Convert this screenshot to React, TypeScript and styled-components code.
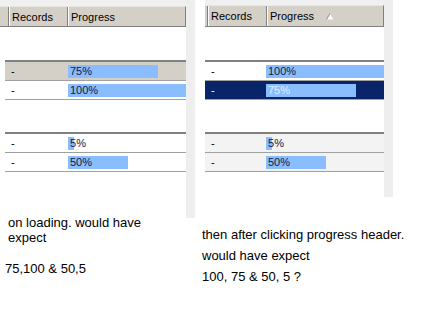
import * as React from "react";
import styled, { createGlobalStyle } from "styled-components";

const GlobalStyle = createGlobalStyle`
  html, body {
    margin: 0;
    padding: 0;
    background: #ffffff;
  }
`;

type Tone = "white" | "gray" | "light" | "selected";

interface RowData {
  pct: number;
  tone: Tone;
}

const leftGroups: RowData[][] = [
  [
    { pct: 75, tone: "gray" },
    { pct: 100, tone: "white" },
  ],
  [
    { pct: 5, tone: "white" },
    { pct: 50, tone: "white" },
  ],
];

const rightGroups: RowData[][] = [
  [
    { pct: 100, tone: "white" },
    { pct: 75, tone: "selected" },
  ],
  [
    { pct: 5, tone: "light" },
    { pct: 50, tone: "light" },
  ],
];

const toneBg: Record<Tone, string> = {
  white: "#ffffff",
  gray: "#d4d0c8",
  light: "#f3f3f3",
  selected: "#0a246a",
};

const Page = styled.div`
  display: flex;
  width: 426px;
  height: 312px;
  font-family: "Liberation Sans", Arial, sans-serif;
  color: #000;
`;

const Column = styled.div<{ $width: number }>`
  display: flex;
  flex-direction: column;
  width: ${(p) => p.$width}px;
  flex-shrink: 0;
`;

const Shot = styled.div<{ $height: number; $offset: number }>`
  display: flex;
  height: ${(p) => p.$height}px;
  margin-left: ${(p) => p.$offset}px;
`;

const Grid = styled.div<{ $width: number; $band: number }>`
  display: flex;
  flex-direction: column;
  width: ${(p) => p.$width}px;
  border-top: ${(p) => p.$band}px solid #f0f0f0;
  font-size: 11px;
`;

const Strip = styled.div`
  width: 9px;
  background: #eeeeee;
`;

const Header = styled.div<{ $height: number }>`
  display: flex;
  height: ${(p) => p.$height}px;
  box-sizing: border-box;
  background: #d4d0c8;
  border-top: 1px solid #e8e6e0;
  border-bottom: 1px solid #808080;
  border-right: 1px solid #808080;
`;

const HeaderStub = styled.div<{ $width: number }>`
  width: ${(p) => p.$width}px;
`;

const HeaderCell = styled.div<{ $width?: number }>`
  display: flex;
  align-items: center;
  gap: 12px;
  box-sizing: border-box;
  padding-left: 3px;
  border-left: 1px solid #808080;
  box-shadow: inset 1px 0 #ffffff;
  ${(p) => (p.$width ? `width: ${p.$width}px;` : "flex: 1;")}
`;

const Blank = styled.div<{ $height: number }>`
  height: ${(p) => p.$height}px;
`;

const Group = styled.div<{ $inset: number }>`
  display: flex;
  flex-direction: column;
  margin-left: ${(p) => p.$inset}px;
  border-top: 2px solid #808080;
`;

const Row = styled.div<{ $tone: Tone }>`
  display: flex;
  height: 18px;
  border-bottom: 1px solid #a0a0a0;
  background: ${(p) => toneBg[p.$tone]};
  color: ${(p) => (p.$tone === "selected" ? "#ffffff" : "#000000")};
`;

const DashCell = styled.div<{ $width: number }>`
  display: flex;
  align-items: center;
  width: ${(p) => p.$width}px;
  padding-left: 6px;
  box-sizing: border-box;
`;

const ProgressCell = styled.div<{ $pct: number; $selected: boolean }>`
  flex: 1;
  display: flex;
  align-items: center;
  padding-left: 2px;
  color: ${(p) => (p.$selected ? "#e4ecff" : "#10184a")};
  background: linear-gradient(#89bdfd, #89bdfd) no-repeat left center;
  background-size: ${(p) => p.$pct * 1.2}px 13px;
`;

const Caption = styled.div<{
  $indent: number;
  $top: number;
  $lineHeight: number;
  $width: number;
}>`
  font-size: 13px;
  line-height: ${(p) => p.$lineHeight}px;
  padding-left: ${(p) => p.$indent}px;
  margin-top: ${(p) => p.$top}px;
  width: ${(p) => p.$width}px;
`;

const SortArrow = () => (
  <svg width="8" height="7" viewBox="0 0 8 7">
    <polygon points="4,0.5 7.5,6.5 0.5,6.5" fill="#fafafa" />
    <line x1="4" y1="0.5" x2="0.5" y2="6.5" stroke="#8c8c8c" strokeWidth="1" />
  </svg>
);

interface TableProps {
  groups: RowData[][];
  width: number;
  band: number;
  headerHeight: number;
  stub: number;
  recordsWidth: number;
  inset: number;
  dashWidth: number;
  sorted?: boolean;
}

const Table = ({
  groups,
  width,
  band,
  headerHeight,
  stub,
  recordsWidth,
  inset,
  dashWidth,
  sorted,
}: TableProps) => (
  <Grid $width={width} $band={band}>
    <Header $height={headerHeight}>
      <HeaderStub $width={stub} />
      <HeaderCell $width={recordsWidth}>Records</HeaderCell>
      <HeaderCell>
        Progress
        {sorted && <SortArrow />}
      </HeaderCell>
    </Header>
    {groups.map((rows, i) => (
      <React.Fragment key={i}>
        <Blank $height={i === 0 ? 33 : 32} />
        <Group $inset={inset}>
          {rows.map((r, j) => (
            <Row key={j} $tone={r.tone}>
              <DashCell $width={dashWidth}>-</DashCell>
              <ProgressCell $pct={r.pct} $selected={r.tone === "selected"}>
                {r.pct}%
              </ProgressCell>
            </Row>
          ))}
        </Group>
      </React.Fragment>
    ))}
  </Grid>
);

export default function App() {
  return (
    <>
      <GlobalStyle />
      <Page>
        <Column $width={200}>
          <Shot $height={218} $offset={0}>
            <Table
              groups={leftGroups}
              width={186}
              band={6}
              headerHeight={21}
              stub={8}
              recordsWidth={59}
              inset={5}
              dashWidth={63}
            />
            <Strip />
          </Shot>
          <Caption $indent={8} $top={-3} $lineHeight={15} $width={160}>
            on loading. would have expect
          </Caption>
          <Caption $indent={5} $top={16} $lineHeight={15} $width={160}>
            75,100 &amp; 50,5
          </Caption>
        </Column>
        <Column $width={226}>
          <Shot $height={197} $offset={5}>
            <Table
              groups={rightGroups}
              width={179}
              band={5}
              headerHeight={22}
              stub={2}
              recordsWidth={59}
              inset={0}
              dashWidth={61}
              sorted
            />
            <Strip />
          </Shot>
          <Caption $indent={2} $top={27} $lineHeight={21} $width={224}>
            then after clicking progress header.
            <br />
            would have expect
            <br />
            100, 75 &amp; 50, 5 ?
          </Caption>
        </Column>
      </Page>
    </>
  );
}
